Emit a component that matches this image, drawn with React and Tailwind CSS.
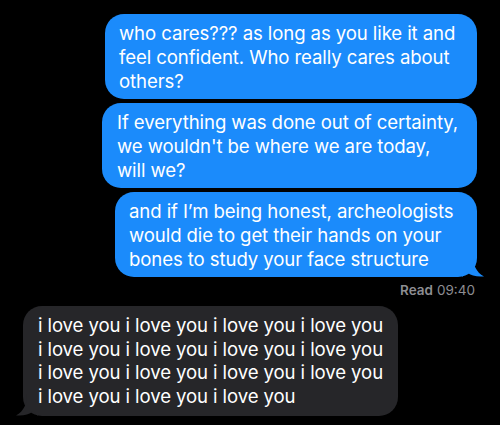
export default function App() {
  const font = { fontFamily: 'Inter, "Liberation Sans", sans-serif' };
  return (
    <div className="w-[500px] h-[425px] bg-black overflow-hidden flex flex-col" style={font}>
      <div className="flex flex-col items-end pr-[23px] pt-[14px] gap-[4px]">
        <div className="w-[372px] h-[85px] rounded-[19px] bg-[#1b8bfb] text-white text-[18.6px] leading-[24px] pl-[14px] pt-[7px] tracking-[-0.1px]">
          who cares??? as long as you like it and<br />feel confident. Who really cares about<br />others?
        </div>
        <div className="w-[375px] h-[85px] rounded-[19px] bg-[#1b8bfb] text-white text-[18.6px] leading-[24px] pl-[15px] pt-[7px] tracking-[-0.1px]">
          If everything was done out of certainty,<br />we wouldn't be where we are today,<br />will we?
        </div>
        <div className="relative w-[362px] h-[85px] rounded-[19px] bg-[#1b8bfb] text-white text-[18.6px] leading-[24px] pl-[14px] pt-[7px] tracking-[-0.1px]">
          and if I’m being honest, archeologists<br />would die to get their hands on your<br />bones to study your face structure
          <svg className="absolute right-[-7px] bottom-0" width="22" height="22" viewBox="0 0 22 22">
            <path d="M0 0 L11 0 C11 10 14 17 22 21.5 C15 22 9 21 5 17 C3 19 1 21 0 22 Z" fill="#1b8bfb" />
          </svg>
        </div>
      </div>
      <div className="flex justify-end pr-[25px] pt-[5px] text-[13.5px] leading-[16px] text-[#8d8d92]">
        <span className="font-semibold">Read</span><span className="ml-[4px]">09:40</span>
      </div>
      <div className="pl-[23px] pt-[8px]">
        <div className="relative w-[375px] h-[110px] rounded-[19px] bg-[#262629] text-white text-[18.6px] leading-[23.5px] pl-[15px] pt-[8px] tracking-[-0.1px]">
          i love you i love you i love you i love you<br />i love you i love you i love you i love you<br />i love you i love you i love you i love you<br />i love you i love you i love you
          <svg className="absolute left-[-7px] bottom-0" width="22" height="22" viewBox="0 0 22 22">
            <path d="M22 0 L11 0 C11 10 8 17 0 21.5 C7 22 13 21 17 17 C19 19 21 21 22 22 Z" fill="#262629" />
          </svg>
        </div>
      </div>
    </div>
  );
}
